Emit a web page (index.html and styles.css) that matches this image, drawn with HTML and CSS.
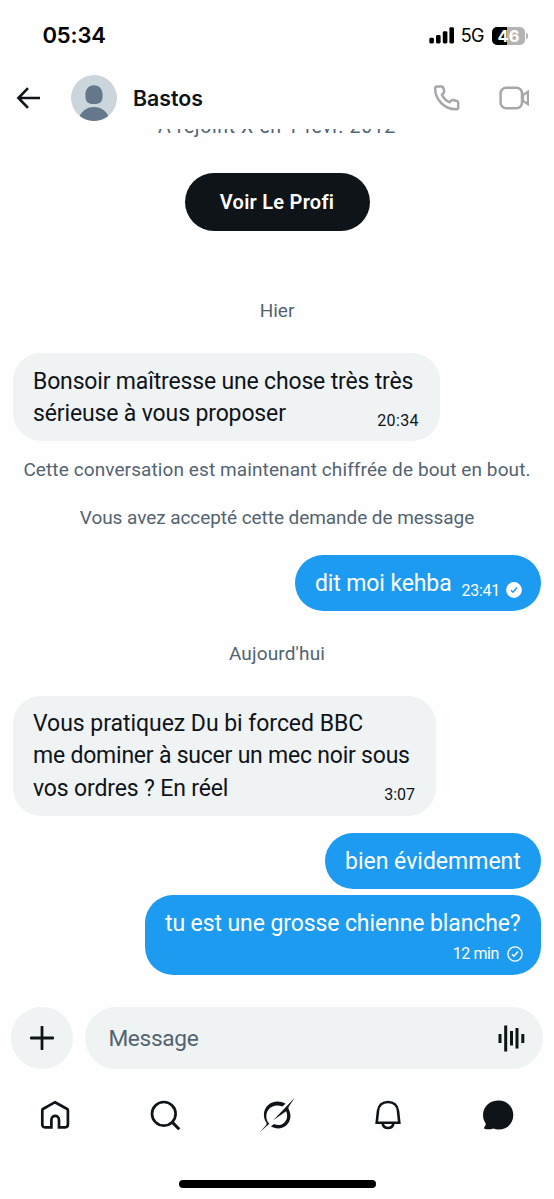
FILE: index.html
```
<!DOCTYPE html>
<html lang="fr">
<head>
<meta charset="utf-8">
<title>Messages</title>
<link rel="stylesheet" href="styles.css">
</head>
<body>
<div class="phone">
  <div class="status">
    <span class="clock">05:34</span>
    <div class="status-right">
      <svg class="signal" width="26" height="17" viewBox="0 0 26 17"><rect x="0.3" y="10.7" width="4.6" height="5.8" rx="1.4"/><rect x="7" y="8" width="4.6" height="8.5" rx="1.4"/><rect x="13.8" y="4.2" width="4.6" height="12.3" rx="1.4"/><rect x="20.4" y="0.2" width="4.6" height="16.3" rx="1.4"/></svg>
      <span class="net">5G</span>
      <div class="battery"><span>46</span></div>
      <i class="nub"></i>
    </div>
  </div>
  <header class="header">
    <svg class="back" width="26" height="24" viewBox="0 0 26 24"><path d="M12 2.200 2.400 12l9.600 9.800M2.600 12H24" fill="none" stroke="#0f1419" stroke-width="2.600"/></svg>
    <svg class="avatar" width="46" height="46" viewBox="0 0 46 46"><defs><clipPath id="disc"><circle cx="23" cy="23" r="23"/></clipPath></defs><g clip-path="url(#disc)"><rect width="46" height="46" fill="#cbd5dc"/><path d="M23 10.200c5.200 0 8.600 3.600 8.600 9.600 0 6.600-1.500 9.300-8.600 9.300s-8.600-2.700-8.600-9.300c0-6 3.400-9.600 8.600-9.600z" fill="#65778a"/><path d="M7 46c2-9.500 8.400-14 16-14s14 4.500 16 14z" fill="#65778a"/></g></svg>
    <span class="name">Bastos</span>
    <svg class="phone-icon" width="28" height="28" viewBox="0 0 28 28"><path d="M4 2.500h4.800c.8 0 1.200.4 1.400 1.100l1 3.600c.1.600 0 1-.4 1.400L8.900 10.700c1.700 3.600 4.200 6 7.500 7.500l2.200-1.800c.4-.4.900-.5 1.400-.4l4 1c.8.200 1.200.7 1.200 1.400v4.800c0 1.400-.8 2.100-2.200 2.100C11.600 25.300 2.400 16 2.100 4.800 2.100 3.300 2.700 2.500 4 2.500z" fill="none" stroke="#a5a7aa" stroke-width="2.500" stroke-linejoin="round"/></svg>
    <svg class="video-icon" width="32" height="26" viewBox="0 0 32 26"><rect x="1.600" y="2.700" width="21.400" height="20.600" rx="5.600" fill="none" stroke="#a5a7aa" stroke-width="2.500"/><path d="M24 10l4.900-3.200v12.400L24 16z" fill="none" stroke="#a5a7aa" stroke-width="2.200"/></svg>
  </header>
  <main class="chat">
    <div class="joined"><span>A rejoint X en 1 févr. 2012</span></div>
    <div class="profile">Voir Le Profi</div>
    <div class="note day1"><span>Hier</span></div>
    <div class="bubble in b1"><div class="text"><span class="l1">Bonsoir maîtresse une chose très très</span><br><span class="l2">sérieuse à vous proposer</span></div><span class="time">20:34</span></div>
    <div class="note n1"><span>Cette conversation est maintenant chiffrée de bout en bout.</span></div>
    <div class="note n2"><span>Vous avez accepté cette demande de message</span></div>
    <div class="bubble out b2"><div class="text">dit moi kehba</div><span class="time">23:41</span><svg class="check" width="16" height="16" viewBox="0 0 16 16"><circle cx="8" cy="8" r="7.900" fill="#fff"/><path d="M5 8.200l2 2 4-4.600" fill="none" stroke="#1d9bf0" stroke-width="1.500"/></svg></div>
    <div class="note day2"><span>Aujourd'hui</span></div>
    <div class="bubble in b3"><div class="text"><span class="l3">Vous pratiquez Du bi forced BBC</span><br><span class="l4">me dominer à sucer un mec noir sous</span><br><span class="l5">vos ordres ? En réel</span></div><span class="time">3:07</span></div>
    <div class="bubble out b4"><div class="text">bien évidemment</div></div>
    <div class="bubble out b5"><div class="text">tu est une grosse chienne blanche?</div><div class="meta"><span class="time">12 min</span><svg class="check" width="16" height="16" viewBox="0 0 16 16"><circle cx="8" cy="8" r="7.100" fill="none" stroke="#fff" stroke-width="1.400"/><path d="M5 8.200l2 2 4-4.600" fill="none" stroke="#fff" stroke-width="1.500"/></svg></div></div>
  </main>
  <div class="composer">
    <div class="plus"><svg width="24" height="24" viewBox="0 0 24 24"><path d="M12 1v22M1 12h22" stroke="#0f1419" stroke-width="2.800" stroke-linecap="round"/></svg></div>
    <div class="field"><span>Message</span><svg width="27" height="27" viewBox="0 0 27 27" fill="#0f1419"><rect x=".5" y="9" width="3" height="9"/><rect x="6.200" y=".5" width="3" height="26"/><rect x="12" y="6" width="3" height="14.500"/><rect x="17.500" y="3" width="3" height="20.500"/><rect x="23.300" y="9" width="3" height="9"/></svg></div>
  </div>
  <nav class="tabs">
    <svg width="32" height="32" viewBox="0 0 32 32"><path d="M16 3.200 28.200 10c.5.300.7.600.7 1.200V25.600c0 1.700-1 2.700-2.700 2.700H20V21c0-5.600-7.600-5.600-7.600 0v7.300H6c-1.700 0-2.700-1-2.700-2.700V11.200c0-.6.200-.9.700-1.200z" fill="none" stroke="#0f1419" stroke-width="2.700"/></svg>
    <svg width="32" height="32" viewBox="0 0 32 32"><circle cx="14.800" cy="14.800" r="11.800" fill="none" stroke="#0f1419" stroke-width="2.700"/><path d="M22.900 22.900l7.300 7.300" stroke="#0f1419" stroke-width="3"/></svg>
    <svg class="spark" width="36" height="36" viewBox="0 0 36 36" fill="#0f1419"><path d="M26.600 6.700C16.500 1.200 4.900 7 4.900 18c0 2.900.9 5.200 2.300 7.300.8 1.300.4 2.200-.6 3.400L.4 35.600l9.900-8.900c-4.400-4.900-3.400-11.500-.3-14.800 3.200-3.600 8.600-4.500 13.300-2.400z"/><path d="M14.300 23.300 35.700.8 29.900 9.600c-.7 1.100-.6 2 .1 3.200 3 6.500 1.100 12.900-3.400 16.200-4.300 3.100-9.900 3.200-14.700.3l3.200-2.200c3.500 1.600 7.400 1.200 10.100-1.400 3.100-2.900 3.800-7.200 1.900-11.400z"/></svg>
    <svg class="bell" width="32" height="32" viewBox="0 0 32 32"><path d="M4.700 23.800 6 11.900C6.600 6.300 10.600 3 16 3s9.400 3.300 10 8.900l1.300 11.900z" fill="none" stroke="#0f1419" stroke-width="2.600"/><path d="M10.600 24.500c1 6 9.800 6 10.800 0" fill="none" stroke="#0f1419" stroke-width="2.600"/></svg>
    <svg class="dm" width="32" height="32" viewBox="0 0 32 32"><path d="M16.500 1.500C25 1.500 31.300 7.600 31.300 16S25 30.500 16.500 30.500c-1.900 0-3.500-.3-5.100-1-2.600.9-5.700 1.100-8.200.6-1.200-.2-1.500-1.100-.7-2 .9-1 1.400-2.200 1.200-3.600C2 21.800 1 19.200 1 16 1 7.600 8 1.500 16.500 1.500z" fill="#0f1419"/></svg>
  </nav>
  <div class="home-bar"></div>
</div>
</body>
</html>
```
FILE: styles.css
```
* { box-sizing: border-box; }
body { margin: 0; background: #fff; font-family: Roboto, "Liberation Sans", sans-serif; color: #0f1419; }
.phone { width: 554px; height: 1199px; display: flex; flex-direction: column; overflow: hidden; white-space: nowrap; background: #fefefe; }
svg { display: block; flex: none; }
.status { height: 70px; flex: none; display: flex; justify-content: space-between; padding: 21px 26px 0 42.500px; font-family: Inter, sans-serif; color: #000; }
.clock { font-size: 22px; line-height: 29px; font-weight: 600; letter-spacing: -.15px; }
.status-right { display: flex; align-items: center; height: 29px; }
.net { font-size: 18px; margin-left: 6px; letter-spacing: -.5px; }
.battery { width: 33px; height: 18px; margin-left: 8px; border-radius: 5px; background: linear-gradient(90deg, #000 46%, #b3b3b3 46%); color: #fff; font-size: 16.500px; line-height: 18px; font-weight: 700; text-align: center; }
.nub { width: 2px; height: 6px; margin-left: 1px; border-radius: 0 2px 2px 0; background: #b3b3b3; }
.header { height: 59px; flex: none; display: flex; align-items: center; padding: 0 23px 3px 16px; }
.avatar { margin-left: 29px; }
.name { margin-left: 16px; font-family: Inter, sans-serif; font-size: 21.300px; font-weight: 600; flex: 1; }
.phone-icon { margin-right: 38px; }
.chat { height: 855px; flex: none; overflow: hidden; display: flex; flex-direction: column; padding: 0 13px; }
.joined { height: 44px; display: flex; justify-content: center; align-items: flex-start; color: #536471; font-size: 19.500px; line-height: 24px; overflow: hidden; }
.joined span { margin-top: -14px; letter-spacing: .62px; }
.profile { width: 185px; height: 58px; flex: none; align-self: center; border-radius: 29px; background: #0f1419; color: #fff; text-align: center; font-size: 20px; line-height: 58px; font-weight: 600; letter-spacing: .25px; }
.note { height: 24px; flex: none; display: flex; justify-content: center; color: #536471; font-size: 19px; line-height: 24px; }
.day1 { margin-top: 68px; }
.bubble { position: relative; flex: none; border-radius: 28px; padding: 12px 20px; font-size: 23px; line-height: 32.300px; display: flex; }
.in { align-self: flex-start; background: #eff3f4; }
.out { align-self: flex-end; background: #1d9bf0; color: #fff; }
.time { font-size: 16px; line-height: 20px; }
.in .time { position: absolute; right: 21px; bottom: 10px; }
.b1 { width: 427px; height: 88px; margin-top: 30px; padding-top: 13px; }
.b1 .time { letter-spacing: .4px; }
.l1 { letter-spacing: -.17px; }
.l2 { letter-spacing: -.14px; }
.l3 { letter-spacing: -.04px; }
.l4 { letter-spacing: -.22px; }
.l5 { letter-spacing: -.15px; }
.n1 { margin-top: 17px; letter-spacing: .1px; }
.n2 { margin-top: 24px; letter-spacing: -.06px; }
.b2 { width: 246px; height: 56px; margin-top: 24.500px; padding-top: 13px; }
.b2 .text { letter-spacing: -.12px; }
.b2 .time { margin: 13px 0 0 10px; letter-spacing: -.3px; }
.b2 .check { margin: 14px 0 0 6.500px; }
.day2 { margin-top: 31px; letter-spacing: .15px; }
.b3 { width: 423px; height: 120px; margin-top: 30px; padding-top: 12.500px; }
.in.b3 .time { bottom: 11px; }
.b4 { width: 216px; height: 56px; margin-top: 17.500px; padding-top: 13px; }
.b5 { width: 396px; height: 80px; margin-top: 6px; padding-top: 13px; flex-direction: column; }
.b5 .text { letter-spacing: -.1px; }
.meta { display: flex; align-items: center; align-self: flex-end; gap: 8px; margin: 4px -2px 0 0; }
.meta .time { line-height: 20px; letter-spacing: -.4px; }
.composer { display: flex; gap: 12px; flex: none; height: 85px; padding: 23px 11px 0 11.400px; }
.plus { width: 62px; height: 62px; flex: none; border-radius: 50%; background: #eff3f4; display: flex; align-items: center; justify-content: center; }
.field { flex: 1; height: 62px; border-radius: 31px; background: #eff3f4; color: #536471; font-size: 22.700px; letter-spacing: -.35px; padding: 0 18px 0 23px; display: flex; align-items: center; justify-content: space-between; }
.tabs { height: 111px; flex: none; display: flex; justify-content: space-between; align-items: flex-start; padding: 30px 40px 0 39.200px; }
.spark { margin-top: -2px; }
.home-bar { width: 197px; height: 8px; border-radius: 4px; background: #000; align-self: center; flex: none; }
```
